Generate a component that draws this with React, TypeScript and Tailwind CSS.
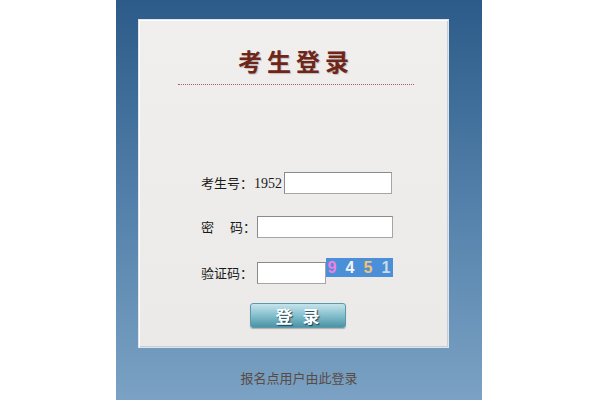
import React from "react";

const cjk = "font-['SimSun','Noto_Sans_CJK_SC',sans-serif]";

function Field({ width }: { width: string }) {
  return (
    <input
      type="text"
      className={`${width} h-[22px] border border-[#a5a5a5] border-t-[#8a8a8a] border-l-[#8a8a8a] bg-white px-1 text-[13px] outline-none`}
    />
  );
}

function Captcha() {
  const digits = [
    { d: "9", c: "text-[#f27fe0]" },
    { d: "4", c: "text-[#f4f4f4]" },
    { d: "5", c: "text-[#f3c272]" },
    { d: "1", c: "text-[#c8dce6]" },
  ];
  return (
    <div className="flex h-[19px] w-[67px] items-center gap-[8px] bg-[#4a8fd8] pl-[1px] font-['Liberation_Sans',sans-serif] text-[16px] font-bold leading-none">
      {digits.map((x) => (
        <span key={x.d} className={`${x.c} w-[10px] text-center`}>
          {x.d}
        </span>
      ))}
    </div>
  );
}

export default function App() {
  return (
    <div className="flex h-[400px] w-[600px] bg-white pl-[116px]">
      <div className="flex h-[400px] w-[366px] flex-col bg-linear-to-b from-[#2c5b89] via-[#5280aa] to-[#7ba2c4] px-[22px] pt-[19px]">
        <div className="flex h-[329px] w-[311px] flex-col items-center border border-[#dfe4ea] bg-linear-to-b from-[#f0efee] to-[#ebeae8] shadow-[inset_1px_1px_0_#ffffff,inset_-1px_-1px_0_#c9ced4]">
          <h1
            className={`mt-[28px] pl-[5px] text-[24px] font-bold leading-[26px] tracking-[5px] text-[#6e261a] [text-shadow:1px_1px_1px_rgba(0,0,0,0.2)] ${cjk}`}
          >
            考生登录
          </h1>
          <div className="ml-[4px] mt-[10px] w-[236px] border-t border-dotted border-[#a8606c]" />

          <div
            className={`mt-[87px] flex w-full flex-col pl-[62px] text-[13px] text-[#1a1a1a] ${cjk}`}
          >
            <div className="flex h-[22px] items-center">
              <span className="w-[53px]">考生号：</span>
              <span className="w-[30px] font-['Liberation_Serif',serif] text-[14px]">
                1952
              </span>
              <Field width="w-[108px]" />
            </div>

            <div className="mt-[22px] flex h-[22px] items-center">
              <span className="w-[56px]">
                密<span className="inline-block w-[16px]" />码：
              </span>
              <Field width="w-[136px]" />
            </div>

            <div className="mt-[20px] flex items-start">
              <span className="mt-[4px] flex h-[22px] w-[56px] items-center">
                验证码：
              </span>
              <div className="mt-[4px]">
                <Field width="w-[69px]" />
              </div>
              <Captcha />
            </div>
          </div>

          <button
            className={`mt-[19px] ml-[8px] h-[25px] w-[96px] rounded-[3px] border border-[#5a9aaa] bg-linear-to-b from-[#c4e4ec] via-[#84bfcd] to-[#4b93a6] text-[17px] font-bold tracking-[10px] pl-[10px] leading-none text-white shadow-[0_1px_1px_rgba(0,0,0,0.25)] [text-shadow:1px_1px_1px_rgba(0,40,60,0.8)] ${cjk}`}
          >
            登录
          </button>
        </div>

        <div
          className={`mt-[20px] text-center text-[13px] text-[#5a4a44] ${cjk}`}
        >
          报名点用户由此登录
        </div>
      </div>
    </div>
  );
}
